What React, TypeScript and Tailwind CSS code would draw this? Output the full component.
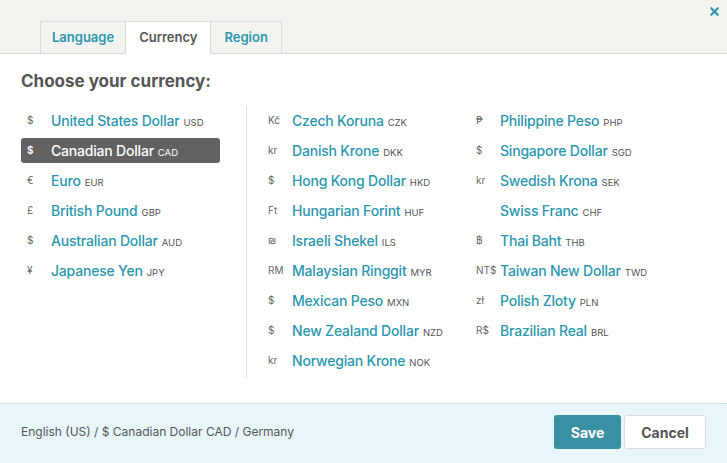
import { X } from "lucide-react";

type Currency = {
  symbol: string;
  name: string;
  code: string;
};

const columns: Currency[][] = [
  [
    { symbol: "$", name: "United States Dollar", code: "USD" },
    { symbol: "$", name: "Canadian Dollar", code: "CAD" },
    { symbol: "€", name: "Euro", code: "EUR" },
    { symbol: "£", name: "British Pound", code: "GBP" },
    { symbol: "$", name: "Australian Dollar", code: "AUD" },
    { symbol: "¥", name: "Japanese Yen", code: "JPY" },
  ],
  [
    { symbol: "Kč", name: "Czech Koruna", code: "CZK" },
    { symbol: "kr", name: "Danish Krone", code: "DKK" },
    { symbol: "$", name: "Hong Kong Dollar", code: "HKD" },
    { symbol: "Ft", name: "Hungarian Forint", code: "HUF" },
    { symbol: "₪", name: "Israeli Shekel", code: "ILS" },
    { symbol: "RM", name: "Malaysian Ringgit", code: "MYR" },
    { symbol: "$", name: "Mexican Peso", code: "MXN" },
    { symbol: "$", name: "New Zealand Dollar", code: "NZD" },
    { symbol: "kr", name: "Norwegian Krone", code: "NOK" },
  ],
  [
    { symbol: "₱", name: "Philippine Peso", code: "PHP" },
    { symbol: "$", name: "Singapore Dollar", code: "SGD" },
    { symbol: "kr", name: "Swedish Krona", code: "SEK" },
    { symbol: "", name: "Swiss Franc", code: "CHF" },
    { symbol: "฿", name: "Thai Baht", code: "THB" },
    { symbol: "NT$", name: "Taiwan New Dollar", code: "TWD" },
    { symbol: "zł", name: "Polish Zloty", code: "PLN" },
    { symbol: "R$", name: "Brazilian Real", code: "BRL" },
  ],
];

const selected = "CAD";

const CurrencyRow = ({ currency }: { currency: Currency }) => {
  const active = currency.code === selected;
  return (
    <div
      className={`flex h-[25px] items-center rounded-[3px] pl-[6px] ${
        active ? "bg-[#626262]" : ""
      }`}
    >
      <span
        className={`w-[24px] shrink-0 text-[10px] ${
          active ? "font-semibold text-white" : "text-[#666]"
        }`}
      >
        {currency.symbol}
      </span>
      <span className="whitespace-nowrap">
        <span
          className={`text-[14px] font-medium tracking-[-0.2px] ${
            active ? "text-white" : "text-[#2b97ae]"
          }`}
        >
          {currency.name}
        </span>
        <span
          className={`ml-[4px] text-[9.5px] ${
            active ? "text-white" : "text-[#555]"
          }`}
        >
          {currency.code}
        </span>
      </span>
    </div>
  );
};

const App = () => {
  return (
    <div className="flex h-[463px] w-[727px] flex-col bg-white font-['Inter',sans-serif] text-[#555]">
      <header className="relative flex h-[54px] items-end border-b border-[#d6d8d4] bg-[#f3f3ef] pl-[40px]">
        <div className="-mb-px flex h-[33px] items-center border border-[#d8dcdc] bg-[#f3f3ef] px-[11px] text-[13px] font-semibold text-[#2b97ae]">
          Language
        </div>
        <div className="-mb-px flex h-[33px] items-center border-y border-t-[#d8dcdc] border-b-white bg-white px-[13px] text-[13px] font-semibold text-[#555]">
          Currency
        </div>
        <div className="-mb-px flex h-[33px] items-center border border-[#d8dcdc] bg-[#f3f3ef] px-[13px] text-[13px] font-semibold text-[#2b97ae]">
          Region
        </div>
        <button className="absolute right-[6px] top-[5px] text-[#2f93a8]">
          <X className="size-[13px]" strokeWidth={4} />
        </button>
      </header>

      <main className="flex-1 pl-[21px] pt-[15px]">
        <h2 className="text-[17px] font-bold text-[#555]">
          Choose your currency:
        </h2>
        <div className="mt-[13px] grid grid-cols-[199px_26px_224px_1fr]">
          <div className="flex flex-col gap-[5px]">
            {columns[0].map((c) => (
              <CurrencyRow key={c.code} currency={c} />
            ))}
          </div>
          <div />
          <div className="-mt-[2px] flex flex-col gap-[5px] border-l border-[#dde0e0] pb-[5px] pl-[15px] pt-[2px]">
            {columns[1].map((c) => (
              <CurrencyRow key={c.code} currency={c} />
            ))}
          </div>
          <div className="flex flex-col gap-[5px]">
            {columns[2].map((c) => (
              <CurrencyRow key={c.code} currency={c} />
            ))}
          </div>
        </div>
      </main>

      <footer className="flex h-[60px] items-center justify-between border-t border-dotted border-[#b9d6e0] bg-[#e8f5fa] pb-[3px] pl-[21px] pr-[21px]">
        <span className="text-[12px] text-[#555]">
          English (US) / $ Canadian Dollar CAD / Germany
        </span>
        <div className="flex gap-[3px]">
          <button className="h-[34px] w-[67px] rounded-[3px] bg-[#3a91a3] text-[14px] font-bold text-white">
            Save
          </button>
          <button className="h-[34px] w-[82px] rounded-[3px] border border-[#dcdcdc] bg-white text-[14px] font-bold text-[#555]">
            Cancel
          </button>
        </div>
      </footer>
    </div>
  );
};

export default App;
